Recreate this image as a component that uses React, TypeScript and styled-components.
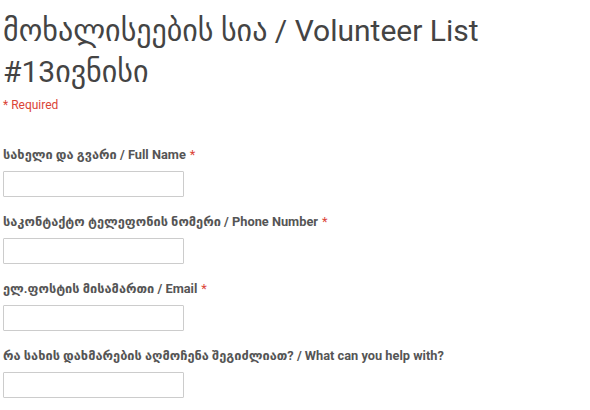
import styled, { createGlobalStyle } from "styled-components";

const GlobalStyle = createGlobalStyle`
  html, body {
    margin: 0;
    padding: 0;
    background: #fff;
  }
  body {
    font-family: Roboto, "DejaVu Sans", sans-serif;
  }
`;

const Page = styled.main`
  padding: 10px 3px 0;
`;

const Title = styled.h1`
  margin: 0;
  width: 500px;
  font-family: Roboto, "DejaVu Sans", sans-serif;
  font-size: 30px;
  font-weight: 400;
  line-height: 41px;
  color: #444;
`;

const Required = styled.div`
  margin-top: 5px;
  font-size: 12px;
  line-height: 16px;
  color: #db4437;
`;

const Fields = styled.div`
  display: flex;
  flex-direction: column;
  gap: 17px;
  margin-top: 34px;
`;

const Field = styled.div`
  display: flex;
  flex-direction: column;
  gap: 8px;
`;

const Label = styled.label`
  font-family: Roboto, "DejaVu Sans", sans-serif;
  font-size: 12.8px;
  font-weight: 700;
  line-height: 16px;
  color: #555;
`;

const Star = styled.span`
  color: #db4437;
  font-weight: 400;
  margin-left: 4px;
`;

const Input = styled.input`
  box-sizing: border-box;
  width: 181px;
  height: 26px;
  border: 1px solid #ccc;
  border-radius: 1px;
  padding: 0 6px;
  outline: none;
  background: #fff;
`;

const fields = [
  { label: "სახელი და გვარი / Full Name", required: true },
  { label: "საკონტაქტო ტელეფონის ნომერი / Phone Number", required: true },
  { label: "ელ.ფოსტის მისამართი / Email", required: true },
  { label: "რა სახის დახმარების აღმოჩენა შეგიძლიათ? / What can you help with?", required: false },
];

export default function App() {
  return (
    <Page>
      <GlobalStyle />
      <Title>მოხალისეების სია / Volunteer List #13ივნისი</Title>
      <Required>* Required</Required>
      <Fields>
        {fields.map((f) => (
          <Field key={f.label}>
            <Label>
              {f.label}
              {f.required && <Star>*</Star>}
            </Label>
            <Input type="text" />
          </Field>
        ))}
      </Fields>
    </Page>
  );
}
